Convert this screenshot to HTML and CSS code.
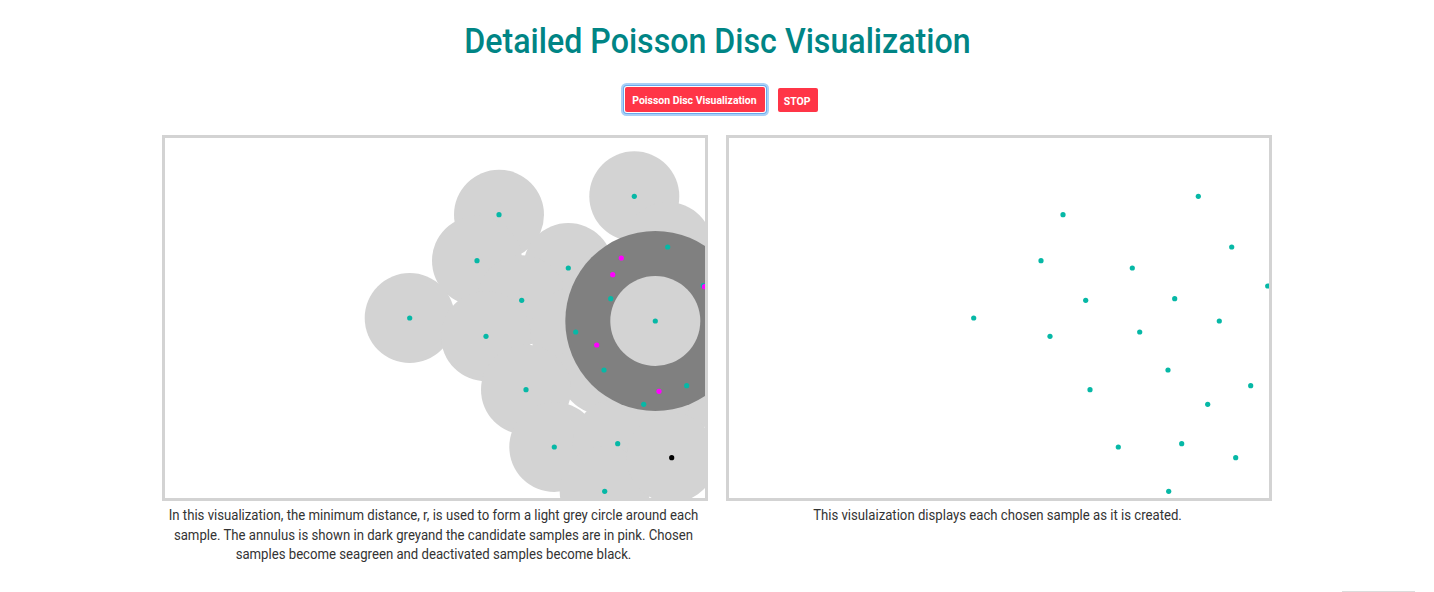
FILE: index.html
```html
<!DOCTYPE html>
<html lang="en">
<head>
<meta charset="utf-8">
<title>Detailed Poisson Disc Visualization</title>
<link rel="stylesheet" href="styles.css">
</head>
<body>
<main class="page">
  <h1 class="title"><span class="title-text">Detailed Poisson Disc Visualization</span></h1>

  <div class="controls">
    <button class="btn btn-run" type="button"><span class="btn-label">Poisson Disc Visualization</span></button>
    <button class="btn btn-stop" type="button"><span class="btn-label">STOP</span></button>
  </div>

  <div class="panels">
    <section class="panel">
      <div class="canvas-frame">
        <svg class="canvas" width="540" height="360" viewBox="0 0 540 360">
          <g class="disc">
            <circle cx="334" cy="76.7" r="45"/>
            <circle cx="469.3" cy="58.3" r="45"/>
            <circle cx="312" cy="122.7" r="45"/>
            <circle cx="403.3" cy="130" r="45"/>
            <circle cx="502.7" cy="109" r="45"/>
            <circle cx="244.7" cy="180" r="45"/>
            <circle cx="356.7" cy="162.3" r="45"/>
            <circle cx="321" cy="198.3" r="45"/>
            <circle cx="490.3" cy="183" r="45"/>
            <circle cx="445.7" cy="160.7" r="45"/>
            <circle cx="410.7" cy="194" r="45"/>
            <circle cx="439" cy="232" r="45"/>
            <circle cx="361" cy="251.7" r="45"/>
            <circle cx="521.7" cy="247.7" r="45"/>
            <circle cx="478.7" cy="266.3" r="45"/>
            <circle cx="389.3" cy="309" r="45"/>
            <circle cx="452.7" cy="305.7" r="45"/>
            <circle cx="439.7" cy="353.3" r="45"/>
            <circle cx="506.7" cy="319.7" r="45"/>
            <circle cx="538.7" cy="148" r="45"/>
          </g>
          <circle class="annulus" cx="490.3" cy="183" r="90"/>
          <circle class="disc" cx="490.3" cy="183" r="45"/>
          <g class="dot">
            <circle cx="334" cy="76.7" r="2.6"/>
            <circle cx="469.3" cy="58.3" r="2.6"/>
            <circle cx="312" cy="122.7" r="2.6"/>
            <circle cx="403.3" cy="130" r="2.6"/>
            <circle cx="502.7" cy="109" r="2.6"/>
            <circle cx="244.7" cy="180" r="2.6"/>
            <circle cx="356.7" cy="162.3" r="2.6"/>
            <circle cx="321" cy="198.3" r="2.6"/>
            <circle cx="490.3" cy="183" r="2.6"/>
            <circle cx="445.7" cy="160.7" r="2.6"/>
            <circle cx="410.7" cy="194" r="2.6"/>
            <circle cx="439" cy="232" r="2.6"/>
            <circle cx="361" cy="251.7" r="2.6"/>
            <circle cx="521.7" cy="247.7" r="2.6"/>
            <circle cx="478.7" cy="266.3" r="2.6"/>
            <circle cx="389.3" cy="309" r="2.6"/>
            <circle cx="452.7" cy="305.7" r="2.6"/>
            <circle cx="439.7" cy="353.3" r="2.6"/>
            <circle cx="538.2" cy="147.5" r="2.6"/>
          </g>
          <g class="candidate">
            <circle cx="456.3" cy="120" r="2.6"/>
            <circle cx="447.7" cy="136.7" r="2.6"/>
            <circle cx="431.7" cy="207" r="2.6"/>
            <circle cx="494" cy="253.3" r="2.6"/>
            <circle cx="539.5" cy="148.7" r="2.6"/>
          </g>
          <circle class="inactive" cx="506.7" cy="319.7" r="2.6"/>
        </svg>
      </div>
      <p class="caption"><span class="caption-text">In this visualization, the minimum distance, r, is used to form a light grey circle around each sample. The annulus is shown in dark greyand the candidate samples are in pink. Chosen samples become seagreen and deactivated samples become black.</span></p>
    </section>

    <section class="panel">
      <div class="canvas-frame">
        <svg class="canvas" width="540" height="360" viewBox="0 0 540 360">
          <g class="dot">
            <circle cx="334" cy="76.7" r="2.6"/>
            <circle cx="469.3" cy="58.3" r="2.6"/>
            <circle cx="312" cy="122.7" r="2.6"/>
            <circle cx="403.3" cy="130" r="2.6"/>
            <circle cx="502.7" cy="109" r="2.6"/>
            <circle cx="244.7" cy="180" r="2.6"/>
            <circle cx="356.7" cy="162.3" r="2.6"/>
            <circle cx="321" cy="198.3" r="2.6"/>
            <circle cx="490.3" cy="183" r="2.6"/>
            <circle cx="445.7" cy="160.7" r="2.6"/>
            <circle cx="410.7" cy="194" r="2.6"/>
            <circle cx="439" cy="232" r="2.6"/>
            <circle cx="361" cy="251.7" r="2.6"/>
            <circle cx="521.7" cy="247.7" r="2.6"/>
            <circle cx="478.7" cy="266.3" r="2.6"/>
            <circle cx="389.3" cy="309" r="2.6"/>
            <circle cx="452.7" cy="305.7" r="2.6"/>
            <circle cx="439.7" cy="353.3" r="2.6"/>
            <circle cx="506.7" cy="319.7" r="2.6"/>
            <circle cx="538.7" cy="148" r="2.6"/>
          </g>
        </svg>
      </div>
      <p class="caption"><span class="caption-text">This visulaization displays each chosen sample as it is created.</span></p>
    </section>
  </div>

  <div class="footer-rule"></div>
</main>
</body>
</html>
```

FILE: styles.css
```css
* { box-sizing: border-box; }

html, body {
  margin: 0;
  padding: 0;
  background: #ffffff;
}

body {
  font-family: Roboto, "Liberation Sans", sans-serif;
  color: #333333;
}

.page {
  width: 1434px;
  display: flex;
  flex-direction: column;
}

.title {
  margin: 21px 0 0;
  font-size: 35px;
  line-height: 41px;
  font-weight: 500;
  color: #008585;
  text-align: center;
}

.title-text {
  display: inline-block;
  transform: scaleX(0.919);
  transform-origin: center;
  white-space: nowrap;
}

.controls {
  margin-top: 25px;
  padding-left: 8px;
  display: flex;
  justify-content: center;
  align-items: flex-end;
  gap: 13px;
  height: 25px;
}

.btn {
  display: flex;
  align-items: center;
  justify-content: center;
  padding: 2px 0 0;
  border: none;
  border-radius: 2px;
  background: #ff3547;
  color: #ffffff;
  font-family: Roboto, "Liberation Sans", sans-serif;
  font-size: 11px;
  font-weight: 700;
  cursor: pointer;
}

.btn-run {
  width: 140px;
  height: 25px;
  box-shadow: 0 0 0 1px #ffffff, 0 0 0 2px #6aa9ec, 0 0 0 4px #a9d0f7;
  border-radius: 2px;
}

.btn-stop {
  width: 40px;
  height: 24px;
}

.btn-label {
  display: inline-block;
  white-space: nowrap;
  transform: scaleX(0.95);
  transform-origin: center;
}

.panels {
  margin-top: 23px;
  display: flex;
  justify-content: center;
  gap: 18px;
}

.panel {
  width: 546px;
  display: flex;
  flex-direction: column;
  align-items: center;
}

.canvas-frame {
  border: 3px solid #d3d3d3;
  width: 546px;
  height: 366px;
  background: #ffffff;
}

.canvas {
  display: block;
}

.disc { fill: #d3d3d3; }
.annulus { fill: #808080; }
.dot { fill: #06b8a6; }
.candidate { fill: #ff00ff; }
.inactive { fill: #000000; }

.caption {
  margin: 5px 0 0;
  width: 546px;
  display: flex;
  justify-content: center;
  font-size: 14px;
  line-height: 19.5px;
  text-align: center;
  color: #333333;
}

.caption-text {
  display: block;
  flex: none;
  width: 581px;
  margin-right: 3px;
  transform: scaleX(0.94);
  transform-origin: center;
}

.footer-rule {
  margin: 26px 19px 0 auto;
  width: 73px;
  border-top: 1px solid #dcdcdc;
}
```
